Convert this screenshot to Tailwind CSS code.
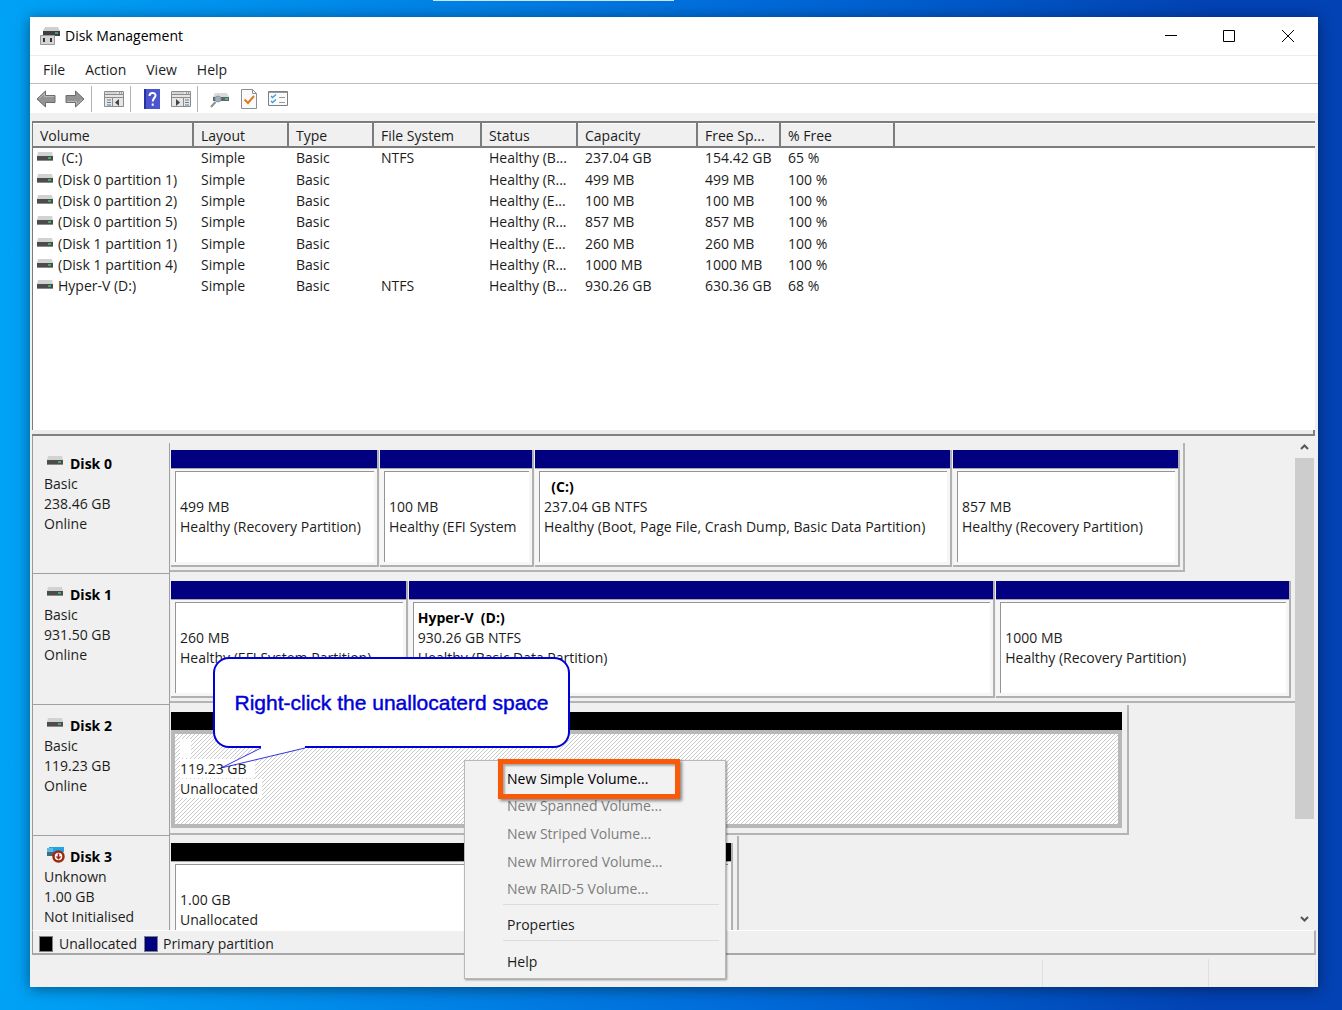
<!DOCTYPE html>
<html lang="en">
<head>
    <meta charset="UTF-8">
    <meta name="viewport" content="width=device-width, initial-scale=1.0">
    <title>Disk Management</title>
    <!-- Tailwind CSS -->
    <script src="https://cdn.jsdelivr.net/npm/@tailwindcss/browser@4"></script>
</head>
<body class="relative flex h-screen flex-col overflow-hidden bg-linear-to-r from-[#00a2f6] via-[#006cda] via-55% to-[#0342b4] to-90% pt-[17px] pr-6 pb-[23px] pl-[30px] font-['Open_Sans',sans-serif] text-sm text-[#1c1c1c]">
    <!-- Shared icons -->
    <svg class="hidden">
        <symbol id="drive" viewBox="0 0 16 10">
            <path d="M1 0h14l1 4H0z" fill="#d2d2d2"/>
            <rect y="4" width="16" height="5" fill="#4c4c4c"/>
            <rect y="8" width="16" height="1" fill="#8a8a8a"/>
            <rect x="11" y="5" width="3" height="2" fill="#3fae6a"/>
        </symbol>
        <symbol id="arrow" viewBox="0 0 20 18">
            <path d="M1 9 9.500 1v4.500H19v7H9.500V17z" fill="#949494" stroke="#6c6c6c" stroke-linejoin="round"/>
            <path d="M3 8.500 8.500 3.500v3H18" fill="none" stroke="#b8b8b8"/>
        </symbol>
    </svg>

    <!-- Edge of another window -->
    <div class="absolute top-0 left-[433px] h-px w-[241px] bg-white/80"></div>

    <main class="relative flex min-h-0 flex-1 flex-col bg-[#f0f0f0] shadow-[0_2px_14px_rgba(0,0,0,0.45)]">
        <!-- Title Bar -->
        <header class="flex h-[39px] shrink-0 items-center border-b border-[#ececec] bg-white pl-[10px] text-black">
            <svg class="mr-[5px] h-5 w-5" viewBox="0 0 20 20">
                <path d="M5 1h13l2 4H3z" fill="#cfcfcf"/>
                <rect x="3" y="5" width="17" height="5" fill="#3f3f3f"/>
                <rect x="15" y="6" width="3" height="2" fill="#4a9a68"/>
                <path d="M.5 9.500h14v9H.5z" fill="#d4d4d4" stroke="#9b9b9b"/>
                <path d="M3 12h2v4H3zM10 12h2v4h-2z" fill="#333"/>
            </svg>
            <h1>Disk Management</h1>
            <div class="ml-auto flex h-full">
                <button aria-label="Minimise" class="flex w-[58px] items-center justify-center">
                    <svg class="h-3 w-3" viewBox="0 0 12 12"><path d="M0 5.500h12" stroke="#000"/></svg>
                </button>
                <button aria-label="Maximise" class="flex w-[58px] items-center justify-center">
                    <svg class="h-3 w-3" viewBox="0 0 12 12"><path d="M.5.5h11v11H.5z" fill="none" stroke="#000"/></svg>
                </button>
                <button aria-label="Close" class="flex w-[60px] items-center justify-center">
                    <svg class="h-3 w-3" viewBox="0 0 12 12"><path d="m0 0 12 12M12 0 0 12" stroke="#000"/></svg>
                </button>
            </div>
        </header>

        <!-- Menu Bar -->
        <nav class="flex h-7 shrink-0 items-center gap-5 border-b border-[#bdbdbd] bg-white pl-[13px]">
            <button>File</button>
            <button>Action</button>
            <button>View</button>
            <button>Help</button>
        </nav>

        <!-- Toolbar -->
        <div class="flex h-[29px] shrink-0 items-center bg-white pt-px pl-[6px]">
            <button aria-label="Back"><svg class="h-[18px] w-5"><use href="#arrow"/></svg></button>
            <button aria-label="Forward" class="ml-[9px]"><svg class="h-[18px] w-5 rotate-180"><use href="#arrow"/></svg></button>
            <div class="mx-[6px] h-[26px] w-px bg-[#b4b4b4]"></div>
            <button aria-label="Show console tree" class="ml-[6px]">
                <svg class="h-[18px] w-5" viewBox="0 0 20 18">
                    <path d="M.5 1.500h19v15H.5z" fill="#e6e6e6" stroke="#8c8c8c"/>
                    <path d="M1 4.500h18M1 7.500h18M8.500 8v9" stroke="#8c8c8c"/>
                    <path d="M2 3h11" stroke="#b9c3cc"/>
                    <path d="M15 3h1m1 0h1" stroke="#555"/>
                    <path d="M3 10h4M3 12.500h4M3 15h4" stroke="#5f7f9b"/>
                    <path d="m15 9-4 3.500 4 3.500z" fill="#444"/>
                </svg>
            </button>
            <div class="mx-[6px] h-[26px] w-px bg-[#b4b4b4]"></div>
            <button aria-label="Help topics" class="ml-[7px]">
                <svg class="h-5 w-4" viewBox="0 0 16 20">
                    <path d="M0 0h16v20H0z" fill="#4a55cf"/>
                    <path d="M0 0h2v20H0z" fill="#2832a0"/>
                    <path d="M5.500 7c0-4 6-4 6-.5 0 2.500-2.800 2.700-2.800 6M8.700 14.500v2.200" fill="none" stroke="#fff" stroke-width="2"/>
                </svg>
            </button>
            <button aria-label="Show action pane" class="ml-[11px]">
                <svg class="h-[18px] w-5" viewBox="0 0 20 18">
                    <path d="M.5 1.500h19v15H.5z" fill="#e6e6e6" stroke="#8c8c8c"/>
                    <path d="M1 4.500h18M1 7.500h18M12.500 8v9" stroke="#8c8c8c"/>
                    <path d="M2 3h11" stroke="#b9c3cc"/>
                    <path d="M15 3h1m1 0h1" stroke="#555"/>
                    <path d="M14 10h4M14 12.500h4M14 15h4" stroke="#5f7f9b"/>
                    <path d="m5 9 4 3.500L5 16z" fill="#444"/>
                </svg>
            </button>
            <div class="mx-[6px] h-[26px] w-px bg-[#b4b4b4]"></div>
            <button aria-label="Rescan disks" class="ml-[6px]">
                <svg class="h-[18px] w-5" viewBox="0 0 20 18">
                    <path d="M5 3h12l2 4H3z" fill="#dadada"/>
                    <path d="M3 7h16v4H3z" fill="#5d666b"/>
                    <path d="M15 8h3v2h-3z" fill="#56b08c"/>
                    <circle cx="8" cy="9" r="3" fill="#9fb0bb" stroke="#8d989f"/>
                    <path d="m5.500 12-4.500 5" stroke="#8f8f8f" stroke-width="2"/>
                </svg>
            </button>
            <button aria-label="Properties" class="ml-[11px]">
                <svg class="h-5 w-4" viewBox="0 0 16 20">
                    <path d="M.5.5h11l4 4v15H.5z" fill="#fafafa" stroke="#8f8f8f"/>
                    <path d="M11.500.5v4h4" fill="none" stroke="#8f8f8f"/>
                    <path d="m3.500 10.500 3.500 3.500 6-7" fill="none" stroke="#e07a1c" stroke-width="2"/>
                </svg>
            </button>
            <button aria-label="Settings" class="ml-[11px]">
                <svg class="h-[18px] w-5" viewBox="0 0 20 18">
                    <path d="M.5 1.500h19v14H.5z" fill="#fafafa" stroke="#7f7f7f"/>
                    <path d="M1 2.500h18" stroke="#9a9a9a"/>
                    <path d="m3 6 1.500 1.500L8 4.500M3 11l1.500 1.500L8 9.500" fill="none" stroke="#3b9be0" stroke-width="1.300"/>
                    <path d="M11 7.500h6M11 12.500h6" stroke="#9a9a9a"/>
                </svg>
            </button>
        </div>

        <!-- Volume List -->
        <section class="mt-2 mr-[3px] ml-[2px] h-[309px] shrink-0 border-t-2 border-l border-[#7c7c7c] bg-white">
            <table class="h-[174px] w-full table-fixed text-left [&_td]:p-0 [&_td]:pl-2 [&_td]:whitespace-nowrap [&_th]:border-t [&_th]:border-r-2 [&_th]:border-b-2 [&_th]:border-t-white [&_th]:border-r-[#7c7c7c] [&_th]:border-b-[#7c7c7c] [&_th]:p-0 [&_th]:pt-[2px] [&_th]:pl-[7px] [&_th]:leading-[18px] [&_th]:font-normal [&_th]:whitespace-nowrap">
                <colgroup>
                    <col class="w-[160px]">
                    <col class="w-[95px]">
                    <col class="w-[85px]">
                    <col class="w-[108px]">
                    <col class="w-24">
                    <col class="w-[120px]">
                    <col class="w-[83px]">
                    <col class="w-[114px]">
                    <col>
                </colgroup>
                <thead class="h-[23px] bg-[#f0f0f0]">
                    <tr>
                        <th>Volume</th>
                        <th>Layout</th>
                        <th>Type</th>
                        <th>File System</th>
                        <th>Status</th>
                        <th>Capacity</th>
                        <th>Free Sp...</th>
                        <th>% Free</th>
                        <td class="border-t border-b-2 border-t-white border-b-[#7c7c7c]"></td>
                    </tr>
                </thead>
                <tbody>
                    <tr>
                        <td><div class="-ml-1 flex items-center gap-[5px]"><svg class="mb-[2px] h-[10px] w-4 shrink-0"><use href="#drive"/></svg>&nbsp;(C:)</div></td>
                        <td>Simple</td><td>Basic</td><td>NTFS</td><td>Healthy (B...</td><td>237.04 GB</td><td>154.42 GB</td><td>65 %</td><td></td>
                    </tr>
                    <tr>
                        <td><div class="-ml-1 flex items-center gap-[5px]"><svg class="mb-[2px] h-[10px] w-4 shrink-0"><use href="#drive"/></svg>(Disk 0 partition 1)</div></td>
                        <td>Simple</td><td>Basic</td><td></td><td>Healthy (R...</td><td>499 MB</td><td>499 MB</td><td>100 %</td><td></td>
                    </tr>
                    <tr>
                        <td><div class="-ml-1 flex items-center gap-[5px]"><svg class="mb-[2px] h-[10px] w-4 shrink-0"><use href="#drive"/></svg>(Disk 0 partition 2)</div></td>
                        <td>Simple</td><td>Basic</td><td></td><td>Healthy (E...</td><td>100 MB</td><td>100 MB</td><td>100 %</td><td></td>
                    </tr>
                    <tr>
                        <td><div class="-ml-1 flex items-center gap-[5px]"><svg class="mb-[2px] h-[10px] w-4 shrink-0"><use href="#drive"/></svg>(Disk 0 partition 5)</div></td>
                        <td>Simple</td><td>Basic</td><td></td><td>Healthy (R...</td><td>857 MB</td><td>857 MB</td><td>100 %</td><td></td>
                    </tr>
                    <tr>
                        <td><div class="-ml-1 flex items-center gap-[5px]"><svg class="mb-[2px] h-[10px] w-4 shrink-0"><use href="#drive"/></svg>(Disk 1 partition 1)</div></td>
                        <td>Simple</td><td>Basic</td><td></td><td>Healthy (E...</td><td>260 MB</td><td>260 MB</td><td>100 %</td><td></td>
                    </tr>
                    <tr>
                        <td><div class="-ml-1 flex items-center gap-[5px]"><svg class="mb-[2px] h-[10px] w-4 shrink-0"><use href="#drive"/></svg>(Disk 1 partition 4)</div></td>
                        <td>Simple</td><td>Basic</td><td></td><td>Healthy (R...</td><td>1000 MB</td><td>1000 MB</td><td>100 %</td><td></td>
                    </tr>
                    <tr>
                        <td><div class="-ml-1 flex items-center gap-[5px]"><svg class="mb-[2px] h-[10px] w-4 shrink-0"><use href="#drive"/></svg>Hyper-V (D:)</div></td>
                        <td>Simple</td><td>Basic</td><td>NTFS</td><td>Healthy (B...</td><td>930.26 GB</td><td>630.36 GB</td><td>68 %</td><td></td>
                    </tr>
                </tbody>
            </table>
        </section>

        <!-- Splitter -->
        <div class="mr-[3px] ml-[2px] h-[6px] shrink-0 border-r-2 border-b-2 border-[#808080] bg-[#ececec]"></div>

        <!-- Disk Graph -->
        <section class="mr-[3px] ml-[2px] flex min-h-0 flex-1 border-l border-[#9a9a9a]">
            <div class="min-w-0 flex-1 overflow-hidden pt-[7px]">
                <!-- Disk 0 -->
                <div class="flex h-[131px]">
                    <div class="w-[137px] shrink-0 border-r border-b border-[#a0a0a0] pt-[11px] pl-[11px] leading-5">
                        <h2 class="flex items-center gap-[7px] pl-[3px] font-bold text-black"><svg class="mb-[6px] h-[10px] w-4"><use href="#drive"/></svg>Disk 0</h2>
                        <p>Basic</p>
                        <p>238.46 GB</p>
                        <p>Online</p>
                    </div>
                    <div class="mb-[2px] grid w-[1015px] max-w-full grid-cols-[209fr_155fr_418fr_227fr] border-r-2 border-b-2 border-[#b4b4b4] pt-[7px] pr-[3px] pb-[3px] pl-px [&_p]:overflow-hidden [&_p]:whitespace-nowrap">
                        <div class="mr-px flex min-w-0 flex-col border-r-2 border-b-2 border-[#b0b0b0]">
                            <div class="h-[18px] bg-[#000080]"></div>
                            <div class="flex-1 border-t border-[#a8a8a8] bg-[#f6f6f6] pt-[2px] pr-[3px] pb-[3px] pl-1">
                                <div class="h-full border-t border-l border-[#959595] bg-white pt-[5px] pl-1 leading-5"><p>&nbsp;</p><p>499 MB</p><p>Healthy (Recovery Partition)</p></div>
                            </div>
                        </div>
                        <div class="mr-px flex min-w-0 flex-col border-r-2 border-b-2 border-[#b0b0b0]">
                            <div class="h-[18px] bg-[#000080]"></div>
                            <div class="flex-1 border-t border-[#a8a8a8] bg-[#f6f6f6] pt-[2px] pr-[3px] pb-[3px] pl-1">
                                <div class="h-full border-t border-l border-[#959595] bg-white pt-[5px] pl-1 leading-5"><p>&nbsp;</p><p>100 MB</p><p>Healthy (EFI System</p></div>
                            </div>
                        </div>
                        <div class="mr-px flex min-w-0 flex-col border-r-2 border-b-2 border-[#b0b0b0]">
                            <div class="h-[18px] bg-[#000080]"></div>
                            <div class="flex-1 border-t border-[#a8a8a8] bg-[#f6f6f6] pt-[2px] pr-[3px] pb-[3px] pl-1">
                                <div class="h-full border-t border-l border-[#959595] bg-white pt-[5px] pl-1 leading-5"><p class="font-bold text-black">&nbsp;&nbsp;(C:)</p><p>237.04 GB NTFS</p><p>Healthy (Boot, Page File, Crash Dump, Basic Data Partition)</p></div>
                            </div>
                        </div>
                        <div class="flex min-w-0 flex-col border-r-2 border-b-2 border-[#b0b0b0]">
                            <div class="h-[18px] bg-[#000080]"></div>
                            <div class="flex-1 border-t border-[#a8a8a8] bg-[#f6f6f6] pt-[2px] pr-[3px] pb-[3px] pl-1">
                                <div class="h-full border-t border-l border-[#959595] bg-white pt-[5px] pl-1 leading-5"><p>&nbsp;</p><p>857 MB</p><p>Healthy (Recovery Partition)</p></div>
                            </div>
                        </div>
                    </div>
                </div>
                <!-- Disk 1 -->
                <div class="flex h-[131px]">
                    <div class="w-[137px] shrink-0 border-r border-b border-[#a0a0a0] pt-[11px] pl-[11px] leading-5">
                        <h2 class="flex items-center gap-[7px] pl-[3px] font-bold text-black"><svg class="mb-[6px] h-[10px] w-4"><use href="#drive"/></svg>Disk 1</h2>
                        <p>Basic</p>
                        <p>931.50 GB</p>
                        <p>Online</p>
                    </div>
                    <div class="mb-[2px] grid min-w-0 flex-1 grid-cols-[238fr_588fr_295fr] border-b-2 border-[#b4b4b4] pt-[7px] pr-1 pb-[3px] pl-px [&_p]:overflow-hidden [&_p]:whitespace-nowrap">
                        <div class="mr-px flex min-w-0 flex-col border-r-2 border-b-2 border-[#b0b0b0]">
                            <div class="h-[18px] bg-[#000080]"></div>
                            <div class="flex-1 border-t border-[#a8a8a8] bg-[#f6f6f6] pt-[2px] pr-[3px] pb-[3px] pl-1">
                                <div class="h-full border-t border-l border-[#959595] bg-white pt-[5px] pl-1 leading-5"><p>&nbsp;</p><p>260 MB</p><p>Healthy (EFI System Partition)</p></div>
                            </div>
                        </div>
                        <div class="mr-px flex min-w-0 flex-col border-r-2 border-b-2 border-[#b0b0b0]">
                            <div class="h-[18px] bg-[#000080]"></div>
                            <div class="flex-1 border-t border-[#a8a8a8] bg-[#f6f6f6] pt-[2px] pr-[3px] pb-[3px] pl-1">
                                <div class="h-full border-t border-l border-[#959595] bg-white pt-[5px] pl-1 leading-5"><p class="font-bold text-black">Hyper-V&nbsp; (D:)</p><p>930.26 GB NTFS</p><p>Healthy (Basic Data Partition)</p></div>
                            </div>
                        </div>
                        <div class="flex min-w-0 flex-col border-r-2 border-b-2 border-[#b0b0b0]">
                            <div class="h-[18px] bg-[#000080]"></div>
                            <div class="flex-1 border-t border-[#a8a8a8] bg-[#f6f6f6] pt-[2px] pr-[3px] pb-[3px] pl-1">
                                <div class="h-full border-t border-l border-[#959595] bg-white pt-[5px] pl-1 leading-5"><p>&nbsp;</p><p>1000 MB</p><p>Healthy (Recovery Partition)</p></div>
                            </div>
                        </div>
                    </div>
                </div>
                <!-- Disk 2 -->
                <div class="flex h-[131px]">
                    <div class="w-[137px] shrink-0 border-r border-b border-[#a0a0a0] pt-[11px] pl-[11px] leading-5">
                        <h2 class="flex items-center gap-[7px] pl-[3px] font-bold text-black"><svg class="mb-[6px] h-[10px] w-4"><use href="#drive"/></svg>Disk 2</h2>
                        <p>Basic</p>
                        <p>119.23 GB</p>
                        <p>Online</p>
                    </div>
                    <div class="mb-px flex w-[959px] max-w-full border-r-2 border-b-2 border-[#b4b4b4] pt-[7px] pr-[5px] pb-[5px] pl-px">
                        <div class="flex min-w-0 flex-1 flex-col">
                            <div class="h-[18px] bg-black"></div>
                            <div class="flex-1 border-4 border-[#b8b8b8] bg-white bg-[linear-gradient(-45deg,#cacaca_12%,transparent_12%,transparent_50%,#cacaca_50%,#cacaca_62%,transparent_62%)] bg-size-[4px_4px] pt-[5px] pl-[5px] leading-5"><p><span class="bg-white">&nbsp;&nbsp;&nbsp;</span></p><p><span class="bg-white pr-2">119.23 GB</span></p><p><span class="bg-white pr-1">Unallocated</span></p></div>
                        </div>
                    </div>
                </div>
                <!-- Disk 3 -->
                <div class="flex h-[131px]">
                    <div class="w-[137px] shrink-0 border-r border-b border-[#a0a0a0] pt-[11px] pl-[11px] leading-5">
                        <h2 class="flex items-center gap-[5px] pl-[3px] font-bold text-black">
                            <svg class="mb-1 h-4 w-[18px]" viewBox="0 0 18 16">
                                <path d="M2 0h15v5H2z" fill="#1ea5e8"/>
                                <path d="M0 2h3v3h6v4H0z" fill="#47677c"/>
                                <path d="M0 1h6v4H0z" fill="#5fb9e4"/>
                                <circle cx="11.500" cy="9.500" r="5" fill="#fff" stroke="#9c2a10" stroke-width="2.500"/>
                                <path d="M11.500 6.500V10" fill="none" stroke="#9c2a10" stroke-width="1.600"/>
                                <path d="M8.500 9.500h6l-3 3.200z" fill="#9c2a10"/>
                            </svg>Disk 3
                        </h2>
                        <p>Unknown</p>
                        <p>1.00 GB</p>
                        <p>Not Initialised</p>
                    </div>
                    <div class="mb-[2px] flex w-[569px] max-w-full border-r-2 border-b-2 border-[#b4b4b4] pt-[7px] pr-1 pb-[3px] pl-px">
                        <div class="flex min-w-0 flex-1 flex-col border-r-2 border-b-2 border-[#b0b0b0]">
                            <div class="h-[18px] bg-black"></div>
                            <div class="flex-1 border-t border-[#a8a8a8] bg-[#f6f6f6] pt-[2px] pr-[3px] pb-[3px] pl-1">
                                <div class="h-full border-t border-l border-[#959595] bg-white pt-[5px] pl-1 leading-5"><p>&nbsp;</p><p>1.00 GB</p><p>Unallocated</p></div>
                            </div>
                        </div>
                    </div>
                </div>
            </div>
            <!-- Scrollbar -->
            <div class="flex w-5 shrink-0 flex-col items-center pr-px">
                <button aria-label="Scroll up" class="flex h-[22px] items-center"><svg class="h-[6px] w-[9px]" viewBox="0 0 9 6"><path d="M1 5 4.500 1.500 8 5" fill="none" stroke="#555" stroke-width="2"/></svg></button>
                <div class="h-[361px] w-full bg-[#cdcdcd]"></div>
                <button aria-label="Scroll down" class="mt-auto flex h-[22px] items-center"><svg class="h-[6px] w-[9px]" viewBox="0 0 9 6"><path d="M1 1l3.500 3.500L8 1" fill="none" stroke="#555" stroke-width="2"/></svg></button>
            </div>
        </section>

        <!-- Legend -->
        <div class="mr-[2px] ml-[2px] flex h-[25px] shrink-0 items-center border-t border-r-2 border-b-2 border-l border-t-white border-r-[#b0b0b0] border-b-[#a8a8a8] border-l-[#9a9a9a] pt-[3px] pl-[6px]">
            <span class="mr-[6px] h-4 w-[14px] border border-[#808080] bg-black"></span>Unallocated
            <span class="mr-[5px] ml-[7px] h-4 w-[14px] border border-[#808080] bg-[#000080]"></span>Primary partition
        </div>

        <!-- Status Bar -->
        <footer class="flex h-8 shrink-0 justify-end pt-1 pr-[2px]">
            <div class="w-[166px] border-l border-[#e0e0e0]"></div>
            <div class="w-[108px] border-x border-[#e0e0e0]"></div>
        </footer>

        <!-- Context Menu -->
        <div role="menu" class="absolute top-[743px] left-[434px] flex w-[262px] flex-col border border-[#b8b8b8] bg-[#f2f2f2] pt-1 pb-[2px] shadow-[1px_1px_2px_rgba(0,0,0,0.4)] [&_button]:pl-[42px] [&_button]:text-left">
            <div class="flex h-[138px] flex-col [&_button]:flex-1">
                <button role="menuitem" class="text-black">New Simple Volume...</button>
                <button role="menuitem" disabled class="text-[#7d7d7d]">New Spanned Volume...</button>
                <button role="menuitem" disabled class="text-[#7d7d7d]">New Striped Volume...</button>
                <button role="menuitem" disabled class="text-[#7d7d7d]">New Mirrored Volume...</button>
                <button role="menuitem" disabled class="text-[#7d7d7d]">New RAID-5 Volume...</button>
            </div>
            <div class="mt-px mr-[6px] mb-[6px] ml-[38px] h-px bg-[#dcdcdc]"></div>
            <button role="menuitem" class="h-7">Properties</button>
            <div class="mt-px mr-[6px] mb-[7px] ml-[38px] h-px bg-[#dcdcdc]"></div>
            <button role="menuitem" class="h-7">Help</button>
        </div>

        <!-- Highlight round the first menu item -->
        <div class="pointer-events-none absolute top-[742px] left-[468px] h-10 w-[182px] border-[5px] border-[#f85a08] shadow-[2px_2px_3px_rgba(0,0,0,0.45),inset_2px_2px_2px_rgba(0,0,0,0.3)]"></div>

        <!-- Callout -->
        <div class="absolute top-[640px] left-[183px] flex h-[91px] w-[357px] items-center justify-center rounded-2xl border-2 border-[#0000d8] bg-white font-['Liberation_Sans',sans-serif] text-[21px] whitespace-nowrap text-[#0000d8] [-webkit-text-stroke:thin]">
            Right-click the unallocaterd space
            <svg class="absolute top-[87px] left-1 h-6 w-[90px]" viewBox="0 0 90 24">
                <path d="M42 0v2L2 22 86 2V0z" fill="#fff"/>
                <path d="M42 2 2 22 86 2" fill="none" stroke="#0000d8" stroke-width=".8"/>
            </svg>
        </div>
    </main>
</body>
</html>
